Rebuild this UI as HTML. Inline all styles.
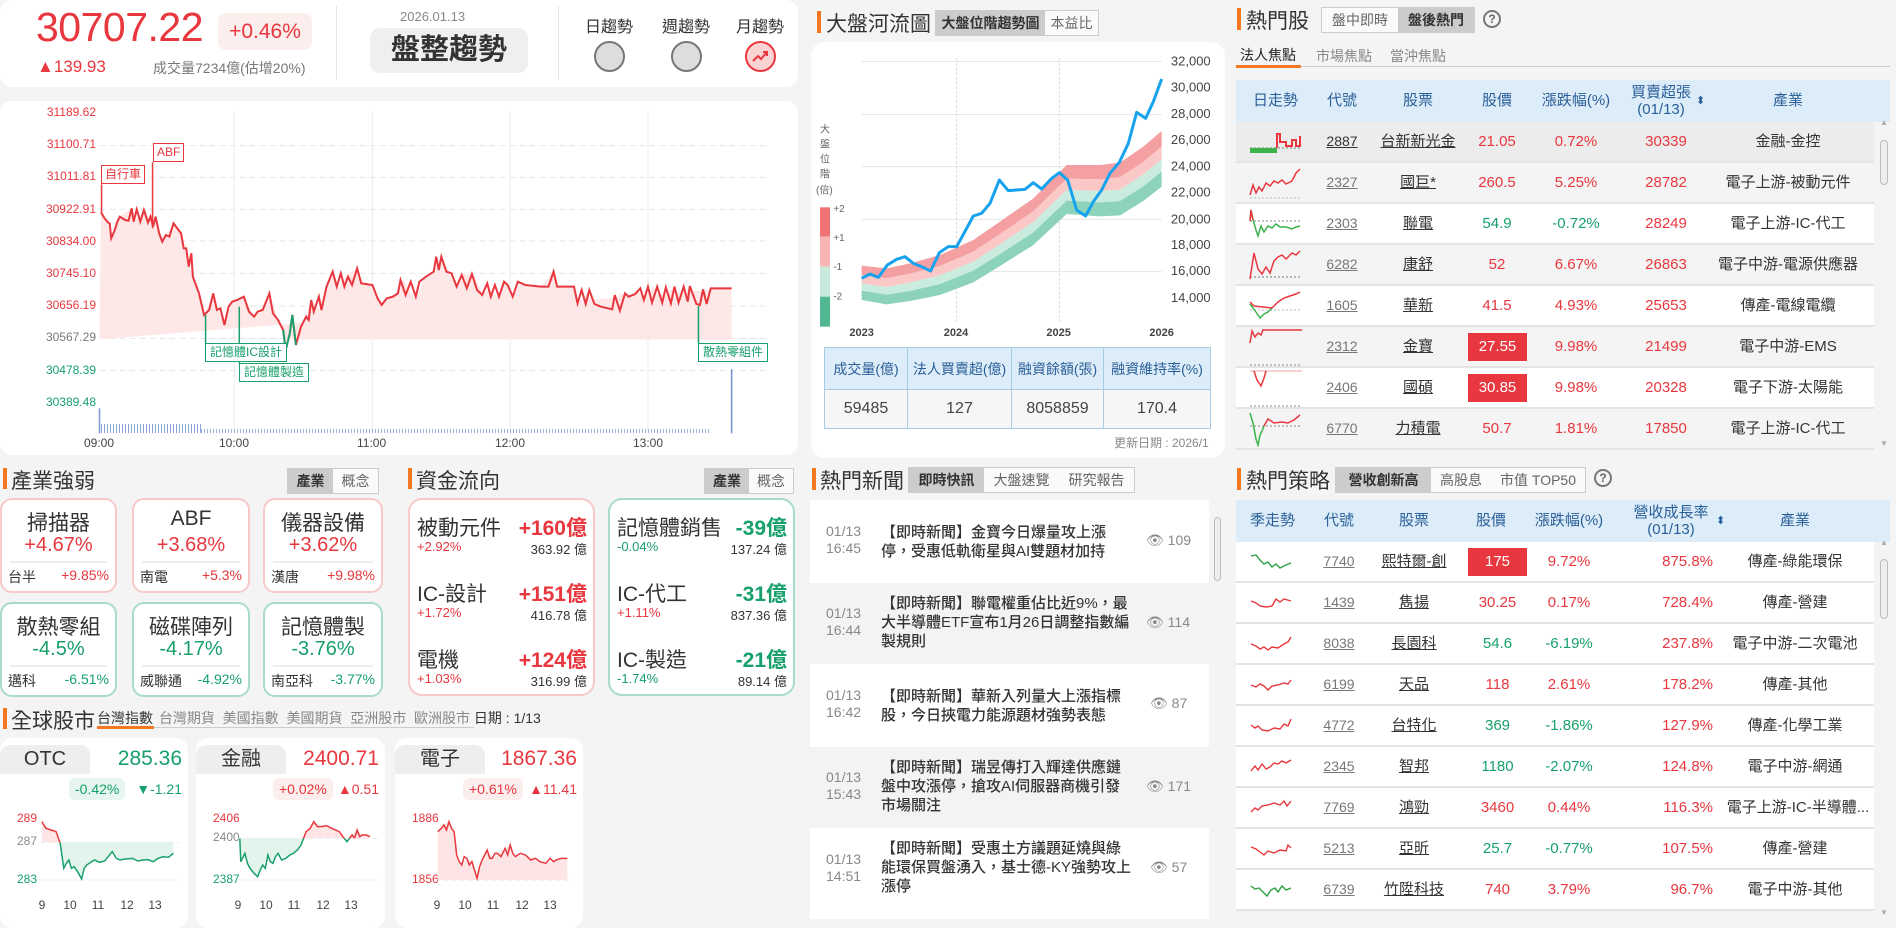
<!DOCTYPE html>
<html><head><meta charset="utf-8">
<style>
*{margin:0;padding:0;box-sizing:border-box}
body{width:1896px;height:919px;background:#f4f4f4;font-family:"Liberation Sans","Noto Sans CJK TC",sans-serif;color:#333;position:relative;overflow:hidden}
.a{position:absolute}
.card{position:absolute;background:#fff;border-radius:12px}
.r{color:#e8373e}.g{color:#17a06b}.gy{color:#888}
.bar{position:absolute;width:4px;background:#f4761f}
.tt{position:absolute;font-size:21px;color:#333;white-space:nowrap}
.tog{position:absolute;display:flex;border:1px solid #ccc;font-size:14px;white-space:nowrap}
.tog span{display:block;text-align:center;background:#f4f4f4;color:#666;line-height:24px}
.tog span.on{background:#ccc;color:#333;font-weight:bold}
.ic{position:absolute;border:2px solid;border-radius:12px;background:#fff}
.ic.p{border-color:#f8c9c9}.ic.q{border-color:#a9dcc8}
.ic .n{position:absolute;left:0;right:0;text-align:center;font-size:21px;top:7px}
.ic .v{position:absolute;left:0;right:0;text-align:center;font-size:20px;top:34px}
.ic .l{position:absolute;left:8px;right:8px;top:61px;border-top:2px solid #eee}
.ic .b{position:absolute;left:6px;right:6px;top:67px;font-size:14px;display:flex;justify-content:space-between}
.fc{position:absolute;border:2px solid;border-radius:14px;background:#fff;top:498px;height:198px}
.fr{position:absolute;left:7px;right:6px;height:44px}
.fr .n{position:absolute;left:0;top:0;font-size:21px}
.fr .v{position:absolute;right:0;top:0;font-size:21px;font-weight:bold}
.fr .p{position:absolute;left:0;top:27px;font-size:13px}
.fr .m{position:absolute;right:0;top:27px;font-size:13px;color:#333}
.gc{position:absolute;top:738px;height:190px;background:#fff;border-radius:12px}
.gc .lab{position:absolute;left:0;top:7px;width:90px;height:29px;background:#eee;border-radius:10px 10px 0 0;font-size:20px;text-align:center;line-height:29px}
.gc .val{position:absolute;right:6px;top:9px;font-size:21px}
.gc .pill{position:absolute;top:40px;height:22px;border-radius:6px;font-size:14px;line-height:22px;padding:0 6px}
.gc .chg{position:absolute;right:6px;top:40px;font-size:14px;line-height:22px}
.gc .yl{position:absolute;left:17px;font-size:12px}
.gc .xl{position:absolute;top:160px;font-size:12px;color:#444;width:20px;text-align:center}
table{border-collapse:collapse}
.tb{position:absolute;left:1236px;width:638px;font-size:15px}
.tb .h{position:absolute;left:0;width:654px;background:#dcedf9;color:#2a5e98}
.tb .row{position:absolute;left:0;width:638px;height:41px;border-bottom:2px solid #e4e4e4}
.tb .c{position:absolute;top:0;line-height:39px;text-align:center;white-space:nowrap}
.u{text-decoration:underline}
.code{color:#777;font-size:14px}
.box{background:#e8373e;color:#fff;display:inline-block;width:59px;line-height:28px;margin-top:5px}
.news{position:absolute;left:810px;width:399px}
.news .d{position:absolute;left:16px;font-size:14px;color:#888;line-height:17px}
.news .t{position:absolute;left:71px;font-size:15px;color:#333;line-height:19px;white-space:nowrap;font-weight:500}
.news .e{position:absolute;left:336px;font-size:14px;color:#888}
</style></head><body>

<!-- TOP CARD -->
<div class="card" style="left:0;top:0;width:798px;height:87px"></div>
<div class="a r" style="left:36px;top:4px;font-size:41px;letter-spacing:-0.5px">30707.22</div>
<div class="a r" style="left:218px;top:13px;width:94px;height:37px;background:#fdeeee;border-radius:8px;font-size:21px;text-align:center;line-height:37px">+0.46%</div>
<div class="a r" style="left:37px;top:57px;font-size:17px">▲139.93</div>
<div class="a" style="left:153px;top:58px;font-size:14px;color:#777">成交量7234億(估增20%)</div>
<div class="a" style="left:336px;top:6px;width:1px;height:74px;background:#e5e5e5"></div>
<div class="a" style="left:400px;top:9px;font-size:13px;color:#888">2026.01.13</div>
<div class="a" style="left:370px;top:28px;width:158px;height:45px;background:#efefef;border-radius:10px;font-size:29px;font-weight:bold;text-align:center;line-height:45px;color:#333">盤整趨勢</div>
<div class="a" style="left:558px;top:6px;width:1px;height:74px;background:#e5e5e5"></div>
<div class="a" style="left:585px;top:13px;font-size:16px">日趨勢</div>
<div class="a" style="left:662px;top:13px;font-size:16px">週趨勢</div>
<div class="a" style="left:736px;top:13px;font-size:16px">月趨勢</div>
<div class="a" style="left:594px;top:41px;width:31px;height:31px;border-radius:50%;background:#ddd;border:2px solid #777"></div>
<div class="a" style="left:671px;top:41px;width:31px;height:31px;border-radius:50%;background:#ddd;border:2px solid #777"></div>
<div class="a" style="left:745px;top:41px;width:31px;height:31px;border-radius:50%;background:#fcd3d3;border:2px solid #e8373e"></div>
<svg class="a" style="left:751px;top:48px" width="19" height="17" viewBox="0 0 19 17"><path d="M2 13 L7 8 L10 11 L16 4 M12 4 H16 V8" fill="none" stroke="#e8373e" stroke-width="2"/></svg>

<!-- MAIN CHART CARD -->
<div class="card" style="left:0;top:101px;width:798px;height:354px"></div>
<svg class="a" style="left:0;top:0" width="800" height="460" viewBox="0 0 1568 1380" preserveAspectRatio="none">
<g stroke="#e6e6e6" stroke-dasharray="6 4" vector-effect="non-scaling-stroke">
<line x1="195" x2="1500" y1="437" y2="437" vector-effect="non-scaling-stroke"/><line x1="195" x2="1500" y1="532" y2="532" vector-effect="non-scaling-stroke"/><line x1="195" x2="1500" y1="628" y2="628" vector-effect="non-scaling-stroke"/><line x1="195" x2="1500" y1="723" y2="723" vector-effect="non-scaling-stroke"/><line x1="195" x2="1500" y1="820" y2="820" vector-effect="non-scaling-stroke"/><line x1="195" x2="1500" y1="918" y2="918" vector-effect="non-scaling-stroke"/><line x1="195" x2="1500" y1="1015" y2="1015" vector-effect="non-scaling-stroke"/><line x1="195" x2="1500" y1="1112" y2="1112" vector-effect="non-scaling-stroke"/>
</g>
<g stroke="#ececec"><line x1="459" x2="459" y1="335" y2="1300" vector-effect="non-scaling-stroke"/><line x1="730" x2="730" y1="335" y2="1300" vector-effect="non-scaling-stroke"/><line x1="1000" x2="1000" y1="335" y2="1300" vector-effect="non-scaling-stroke"/><line x1="1270" x2="1270" y1="335" y2="1300" vector-effect="non-scaling-stroke"/></g>
<polygon fill="#fde7e7" points="195,1018 198,637 215,670 218,715 235,650 258,625 265,660 285,630 300,680 305,650 318,725 340,670 355,700 365,745 372,800 378,830 400,945 418,880 440,975 455,905 478,890 498,950 510,930 528,880 545,960 560,1018 1434,1018 1434,865"/>
<polygon fill="#fde7e7" points="560,1018 573,945 580,1018 600,950 610,900 625,930 640,860 652,815 665,860 680,825 700,805 712,850 730,855 748,915 760,890 780,880 790,840 805,880 818,890 830,840 850,815 865,770 880,820 895,860 910,820 930,830 945,880 960,870 975,890 990,845 1005,890 1020,850 1060,860 1085,815 1090,860 1125,860 1135,910 1150,880 1165,910 1180,920 1200,925 1215,880 1230,890 1250,870 1265,900 1280,860 1300,905 1320,860 1340,905 1350,860 1365,915 1378,870 1385,910 1393,865 1434,865 1434,1018"/>
<polyline fill="none" stroke="#e8373e" stroke-width="2" vector-effect="non-scaling-stroke" points="198,637 205,655 212,668 215,670 218,715 225,690 230,665 235,650 245,660 252,662 258,625 262,665 268,628 275,665 282,630 290,668 295,650 300,680 305,650 312,700 318,725 325,705 332,710 340,670 350,690 355,700 360,745 365,745 370,800 375,760 378,830 390,880 400,945 410,930 418,880 425,930 432,925 440,975 448,920 455,905 465,900 478,890 488,935 498,950 505,935 515,930 528,880 535,940 545,960 555,990 560,1050 568,1000 573,945 580,1035 590,980 600,950 605,960 610,900 615,935 625,890 630,930 640,860 652,815 660,860 668,820 675,860 682,830 690,855 700,805 708,850 730,855 740,895 748,915 758,895 770,890 780,880 785,840 795,885 805,845 815,890 822,845 835,830 850,815 855,770 860,810 865,770 875,815 885,820 895,860 905,825 915,865 925,822 935,870 945,885 955,850 962,890 970,855 978,890 988,845 995,855 1005,890 1015,845 1030,855 1060,860 1075,860 1085,815 1092,860 1125,860 1132,910 1140,870 1148,912 1155,870 1165,912 1178,920 1200,928 1205,885 1215,932 1225,880 1232,890 1245,882 1255,865 1262,900 1270,860 1278,908 1288,860 1298,908 1305,862 1315,910 1322,860 1330,908 1340,860 1348,905 1352,858 1365,912 1372,915 1378,868 1385,912 1393,865 1434,865"/>
<polyline fill="none" stroke="#19a06b" stroke-width="2" vector-effect="non-scaling-stroke" points="555,990 560,1050 568,1000 573,945 580,1035"/>
<g fill="none" stroke-width="1.5" vector-effect="non-scaling-stroke">
<line x1="199" x2="199" y1="553" y2="637" stroke="#e8373e" vector-effect="non-scaling-stroke"/>
<line x1="299" x2="299" y1="487" y2="685" stroke="#e8373e" vector-effect="non-scaling-stroke"/>
<line x1="403" x2="403" y1="945" y2="1030" stroke="#19a06b" vector-effect="non-scaling-stroke"/>
<line x1="469" x2="469" y1="920" y2="1090" stroke="#19a06b" vector-effect="non-scaling-stroke"/>
<line x1="1369" x2="1369" y1="918" y2="1030" stroke="#19a06b" vector-effect="non-scaling-stroke"/>
<line x1="1434" x2="1434" y1="1108" y2="1300" stroke="#6f8fd0" vector-effect="non-scaling-stroke"/>
<line x1="195" x2="195" y1="1225" y2="1300" stroke="#7d98d6" vector-effect="non-scaling-stroke"/>
</g>
</svg>
<div class="a" style="left:101px;top:424px;width:100px;height:9px;background:repeating-linear-gradient(90deg,#8ea6db 0 1px,transparent 1px 3px)"></div>
<div class="a" style="left:201px;top:429px;width:510px;height:4px;background:repeating-linear-gradient(90deg,#9bb0df 0 1px,transparent 1px 3px)"></div>
<div class="a r" style="left:101px;top:165px;padding:0 3px;border:1px solid #e8373e;background:#fff;font-size:12px;line-height:17px">自行車</div>
<div class="a r" style="left:153px;top:143px;padding:0 3px;border:1px solid #e8373e;background:#fff;font-size:12px;line-height:17px">ABF</div>
<div class="a g" style="left:205px;top:343px;padding:0 4px;border:1px solid #19a06b;background:#fff;font-size:12px;line-height:17px">記憶體IC設計</div>
<div class="a g" style="left:239px;top:363px;padding:0 4px;border:1px solid #19a06b;background:#fff;font-size:12px;line-height:17px">記憶體製造</div>
<div class="a g" style="left:698px;top:343px;padding:0 4px;border:1px solid #19a06b;background:#fff;font-size:12px;line-height:17px">散熱零組件</div>
<div class="a" style="left:40px;top:104px;width:56px;text-align:right;font-size:12px;line-height:16px">
<div class="r" style="height:32.2px">31189.62</div><div class="r" style="height:32.2px">31100.71</div><div class="r" style="height:32.2px">31011.81</div><div class="r" style="height:32.2px">30922.91</div><div class="r" style="height:32.2px">30834.00</div><div class="r" style="height:32.2px">30745.10</div><div class="r" style="height:32.2px">30656.19</div><div style="height:32.2px;color:#777">30567.29</div><div class="g" style="height:32.2px">30478.39</div><div class="g" style="height:32.2px">30389.48</div></div>
<div class="a" style="left:84px;top:436px;font-size:12px;color:#444">09:00</div>
<div class="a" style="left:219px;top:436px;font-size:12px;color:#444">10:00</div>
<div class="a" style="left:357px;top:436px;font-size:12px;color:#444">11:00</div>
<div class="a" style="left:495px;top:436px;font-size:12px;color:#444">12:00</div>
<div class="a" style="left:633px;top:436px;font-size:12px;color:#444">13:00</div>

<!-- INDUSTRY -->
<div class="bar" style="left:3px;top:468px;height:21px"></div>
<div class="tt" style="left:11px;top:465px">產業強弱</div>
<div class="tog" style="left:287px;top:468px"><span class="on" style="width:45px">產業</span><span style="width:45px;background:#fafafa">概念</span></div>
<div class="bar" style="left:408px;top:468px;height:21px"></div>
<div class="tt" style="left:416px;top:465px">資金流向</div>
<div class="tog" style="left:704px;top:468px"><span class="on" style="width:44px">產業</span><span style="width:44px;background:#fafafa">概念</span></div>

<div class="ic p" style="left:0;top:498px;width:117px;height:95px"><div class="n">掃描器</div><div class="v r">+4.67%</div><div class="l"></div><div class="b"><span>台半</span><span class="r">+9.85%</span></div></div>
<div class="ic p" style="left:132px;top:498px;width:118px;height:95px"><div class="n">ABF</div><div class="v r">+3.68%</div><div class="l"></div><div class="b"><span>南電</span><span class="r">+5.3%</span></div></div>
<div class="ic p" style="left:263px;top:498px;width:120px;height:95px"><div class="n">儀器設備</div><div class="v r">+3.62%</div><div class="l"></div><div class="b"><span>漢唐</span><span class="r">+9.98%</span></div></div>
<div class="ic q" style="left:0;top:602px;width:117px;height:95px"><div class="n">散熱零組</div><div class="v g">-4.5%</div><div class="l"></div><div class="b"><span>邁科</span><span class="g">-6.51%</span></div></div>
<div class="ic q" style="left:132px;top:602px;width:118px;height:95px"><div class="n">磁碟陣列</div><div class="v g">-4.17%</div><div class="l"></div><div class="b"><span>威聯通</span><span class="g">-4.92%</span></div></div>
<div class="ic q" style="left:263px;top:602px;width:120px;height:95px"><div class="n">記憶體製</div><div class="v g">-3.76%</div><div class="l"></div><div class="b"><span>南亞科</span><span class="g">-3.77%</span></div></div>

<div class="fc" style="left:408px;width:187px;border-color:#f8c9c9">
<div class="fr" style="top:12px"><div class="n">被動元件</div><div class="v r">+160億</div><div class="p r">+2.92%</div><div class="m">363.92 億</div></div>
<div class="fr" style="top:78px"><div class="n">IC-設計</div><div class="v r">+151億</div><div class="p r">+1.72%</div><div class="m">416.78 億</div></div>
<div class="fr" style="top:144px"><div class="n">電機</div><div class="v r">+124億</div><div class="p r">+1.03%</div><div class="m">316.99 億</div></div>
</div>
<div class="fc" style="left:608px;width:187px;border-color:#a9dcc8">
<div class="fr" style="top:12px"><div class="n">記憶體銷售</div><div class="v g">-39億</div><div class="p g">-0.04%</div><div class="m">137.24 億</div></div>
<div class="fr" style="top:78px"><div class="n">IC-代工</div><div class="v g">-31億</div><div class="p r">+1.11%</div><div class="m">837.36 億</div></div>
<div class="fr" style="top:144px"><div class="n">IC-製造</div><div class="v g">-21億</div><div class="p g">-1.74%</div><div class="m">89.14 億</div></div>
</div>

<!-- GLOBAL -->
<div class="bar" style="left:3px;top:708px;height:21px"></div>
<div class="tt" style="left:11px;top:705px">全球股市</div>
<div class="a" style="left:97px;top:727px;width:377px;height:1px;background:#ccc"></div>
<div class="a" style="left:97px;top:726px;width:57px;height:3px;background:#f4761f"></div>
<div class="a" style="left:97px;top:708px;font-size:14px;color:#333;white-space:nowrap;word-spacing:0">台灣指數 <span style="color:#888;margin-left:2px">台灣期貨 &nbsp;美國指數 &nbsp;美國期貨 &nbsp;亞洲股市 &nbsp;歐洲股市</span> 日期 : 1/13</div>

<div class="gc" style="left:0;width:188px"><div class="lab">OTC</div><div class="val g">285.36</div><div class="pill g" style="left:69px;background:#e6f5ef">-0.42%</div><div class="chg g">▼-1.21</div>
<div class="yl r" style="top:73px">289</div><div class="yl gy" style="top:96px">287</div><div class="yl g" style="top:134px">283</div>
<div class="xl" style="left:32px">9</div><div class="xl" style="left:60px">10</div><div class="xl" style="left:88px">11</div><div class="xl" style="left:117px">12</div><div class="xl" style="left:145px">13</div></div>
<div class="gc" style="left:196px;width:189px"><div class="lab">金融</div><div class="val r">2400.71</div><div class="pill r" style="left:77px;background:#fdeeee">+0.02%</div><div class="chg r">▲0.51</div>
<div class="yl r" style="top:73px">2406</div><div class="yl gy" style="top:92px">2400</div><div class="yl g" style="top:134px">2387</div>
<div class="xl" style="left:32px">9</div><div class="xl" style="left:60px">10</div><div class="xl" style="left:88px">11</div><div class="xl" style="left:117px">12</div><div class="xl" style="left:145px">13</div></div>
<div class="gc" style="left:395px;width:188px"><div class="lab">電子</div><div class="val r">1867.36</div><div class="pill r" style="left:68px;background:#fdeeee">+0.61%</div><div class="chg r">▲11.41</div>
<div class="yl r" style="top:73px">1886</div><div class="yl r" style="top:134px">1856</div>
<div class="xl" style="left:32px">9</div><div class="xl" style="left:60px">10</div><div class="xl" style="left:88px">11</div><div class="xl" style="left:117px">12</div><div class="xl" style="left:145px">13</div></div>

<svg class="a" style="left:0;top:455px" width="800" height="464" viewBox="0 0 1568 1392" preserveAspectRatio="none">
<defs><clipPath id="ab1"><rect x="0" y="0" width="400" height="1162"/></clipPath><clipPath id="bl1"><rect x="0" y="1162" width="400" height="300"/></clipPath>
<clipPath id="ab2"><rect x="380" y="0" width="400" height="1150"/></clipPath><clipPath id="bl2"><rect x="380" y="1150" width="400" height="300"/></clipPath></defs>
<g stroke="#e5e5e5" stroke-dasharray="4 4"><line x1="80" x2="350" y1="1275" y2="1275" vector-effect="non-scaling-stroke"/><line x1="465" x2="740" y1="1275" y2="1275" vector-effect="non-scaling-stroke"/><line x1="855" x2="1125" y1="1275" y2="1275" vector-effect="non-scaling-stroke"/><line x1="80" x2="350" y1="1162" y2="1162" vector-effect="non-scaling-stroke"/><line x1="465" x2="740" y1="1150" y2="1150" vector-effect="non-scaling-stroke"/></g>
<g id="otc"><polygon points="82,1162 82,1100 100,1125 110,1130 118,1165 125,1240 135,1215 145,1240 160,1270 170,1230 185,1215 200,1220 220,1190 235,1215 260,1210 280,1215 300,1220 320,1205 340,1195 340,1162" fill="#fde5e5" clip-path="url(#ab1)"/>
<polygon points="82,1162 82,1100 100,1125 110,1130 118,1165 125,1240 135,1215 145,1240 160,1270 170,1230 185,1215 200,1220 220,1190 235,1215 260,1210 280,1215 300,1220 320,1205 340,1195 340,1162" fill="#e3f4ec" clip-path="url(#bl1)"/>
<polyline fill="none" stroke="#e8373e" stroke-width="1.5" vector-effect="non-scaling-stroke" clip-path="url(#ab1)" points="82,1100 90,1120 100,1125 110,1130 118,1165"/>
<polyline fill="none" stroke="#17a06b" stroke-width="1.5" vector-effect="non-scaling-stroke" clip-path="url(#bl1)" points="110,1130 118,1165 125,1240 130,1225 135,1215 140,1240 145,1235 152,1250 160,1272 165,1240 170,1230 180,1220 185,1215 195,1222 205,1218 220,1190 228,1210 235,1215 245,1212 260,1210 270,1218 280,1215 290,1214 300,1220 310,1210 320,1205 330,1207 340,1195"/></g>
<polygon points="470,1150 472,1220 480,1195 490,1240 505,1265 515,1230 525,1200 535,1225 545,1195 560,1210 575,1195 590,1170 600,1130 615,1100 630,1115 650,1120 665,1130 680,1160 690,1140 700,1125 710,1140 725,1145 725,1150" fill="#fde5e5" clip-path="url(#ab2)"/>
<polygon points="470,1150 472,1220 480,1195 490,1240 505,1265 515,1230 525,1200 535,1225 545,1195 560,1210 575,1195 590,1170 600,1130 615,1100 630,1115 650,1120 665,1130 680,1160 690,1140 700,1125 710,1140 725,1145 725,1150" fill="#e3f4ec" clip-path="url(#bl2)"/>
<polyline fill="none" stroke="#17a06b" stroke-width="1.5" vector-effect="non-scaling-stroke" clip-path="url(#bl2)" points="470,1150 472,1220 480,1195 485,1225 490,1240 498,1255 505,1265 510,1245 515,1230 520,1240 525,1200 530,1220 535,1225 540,1205 545,1195 552,1215 560,1210 568,1200 575,1195 583,1185 590,1170 600,1130"/>
<polyline fill="none" stroke="#e8373e" stroke-width="1.5" vector-effect="non-scaling-stroke" clip-path="url(#ab2)" points="590,1170 600,1130 608,1120 615,1100 622,1115 630,1115 640,1112 650,1120 658,1125 665,1130 672,1145 680,1160 690,1140 695,1150 700,1125 705,1145 710,1140 718,1140 725,1145"/>
<polyline fill="none" stroke="#17a06b" stroke-width="1.5" vector-effect="non-scaling-stroke" clip-path="url(#bl2)" points="672,1145 680,1160 690,1140"/>
<polygon points="858,1275 858,1130 870,1110 880,1100 890,1130 895,1200 905,1230 915,1210 925,1220 935,1270 945,1215 955,1185 965,1210 975,1195 990,1180 1000,1170 1010,1205 1030,1200 1050,1210 1070,1225 1090,1215 1112,1210 1112,1275" fill="#fde5e5"/>
<polyline fill="none" stroke="#e8373e" stroke-width="1.5" vector-effect="non-scaling-stroke" points="858,1130 865,1120 870,1110 875,1125 880,1100 885,1120 890,1130 893,1170 895,1200 900,1220 905,1230 910,1205 915,1210 920,1230 925,1220 930,1245 935,1270 940,1235 945,1215 950,1200 955,1185 960,1210 965,1210 970,1195 975,1195 982,1205 990,1180 995,1200 1000,1170 1005,1195 1010,1205 1020,1195 1030,1200 1040,1215 1050,1210 1058,1220 1070,1225 1078,1210 1085,1220 1090,1215 1100,1210 1112,1210"/>
</svg>

<!-- RIVER -->
<div class="bar" style="left:817px;top:11px;height:22px"></div>
<div class="tt" style="left:826px;top:8px">大盤河流圖</div>
<div class="tog" style="left:935px;top:10px"><span class="on" style="width:109px">大盤位階趨勢圖</span><span style="width:53px;background:#fafafa">本益比</span></div>
<div class="card" style="left:811px;top:42px;width:414px;height:416px;border-radius:14px"></div>
<svg class="a" style="left:800px;top:0" width="440" height="460" viewBox="0 0 1320 1380">
<g stroke="#e6e6e6" stroke-width="3"><line x1="185" x2="1085" y1="185" y2="185"/><line x1="185" x2="1085" y1="343" y2="343"/><line x1="185" x2="1085" y1="500" y2="500"/><line x1="185" x2="1085" y1="658" y2="658"/><line x1="185" x2="1085" y1="815" y2="815"/></g>
<g stroke="#d8d8d8" stroke-width="3" stroke-dasharray="8 6"><line x1="470" x2="470" y1="175" y2="965"/><line x1="778" x2="778" y1="175" y2="965"/></g>
<polygon fill="#f4a0a2" points="185,797 260,805 330,790 420,765 520,720 600,665 700,595 800,495 900,495 960,488 1030,440 1085,393 1085,440 1030,486 960,532 900,538 800,536 700,634 600,702 520,755 420,798 330,821 260,835 185,825"/>
<polygon fill="#fbc8c8" points="185,825 260,835 330,821 420,798 520,755 600,702 700,634 800,536 900,538 960,532 1030,486 1085,440 1085,478 1030,523 960,569 900,573 800,570 700,666 600,733 520,785 420,826 330,848 260,861 185,850"/>
<polygon fill="#c9ecdf" points="185,850 260,861 330,848 420,826 520,785 600,733 700,666 800,570 900,573 960,569 1030,523 1085,478 1085,515 1030,559 960,603 900,607 800,602 700,697 600,762 520,812 420,852 330,873 260,884 185,872"/>
<polygon fill="#8dd3b9" points="185,872 260,884 330,873 420,852 520,812 600,762 700,697 800,602 900,607 960,603 1030,559 1085,515 1085,560 1030,603 960,646 900,649 800,642 700,735 600,798 520,847 420,885 330,903 260,913 185,900"/>
<polyline fill="none" stroke="#17a2ee" stroke-width="9" stroke-linejoin="round" points="185,835 210,822 235,832 262,795 290,778 315,770 340,790 365,800 392,813 418,758 445,740 470,740 520,648 545,640 570,610 598,540 625,572 675,568 700,548 725,567 755,535 778,518 803,540 830,630 857,648 880,605 905,570 930,520 958,487 985,430 1010,337 1037,355 1060,305 1085,237"/>
<rect x="60" y="622" width="30" height="88" fill="#f07476"/><rect x="60" y="710" width="30" height="90" fill="#f8b5b6"/><rect x="60" y="800" width="30" height="90" fill="#c5eadc"/><rect x="60" y="890" width="30" height="90" fill="#52b891"/>
<g font-size="30" fill="#666" font-family="Liberation Sans, Noto Sans CJK TC, sans-serif"><text x="100" y="636">+2</text><text x="100" y="723">+1</text><text x="100" y="810">-1</text><text x="100" y="899">-2</text>
<text x="60" y="397">大</text><text x="60" y="442">盤</text><text x="60" y="487">位</text><text x="60" y="532">階</text><text x="48" y="580">(倍)</text></g>
<g font-size="39" fill="#444" font-family="Liberation Sans, sans-serif" text-anchor="end"><text x="1232" y="196">32,000</text><text x="1232" y="274">30,000</text><text x="1232" y="354">28,000</text><text x="1232" y="432">26,000</text><text x="1232" y="511">24,000</text><text x="1232" y="589">22,000</text><text x="1232" y="670">20,000</text><text x="1232" y="747">18,000</text><text x="1232" y="825">16,000</text><text x="1232" y="906">14,000</text></g>
<g font-size="33" fill="#444" font-weight="bold" font-family="Liberation Sans, sans-serif" text-anchor="middle"><text x="185" y="1008">2023</text><text x="468" y="1008">2024</text><text x="776" y="1008">2025</text><text x="1085" y="1008">2026</text></g>
</svg>
<table class="a" style="left:824px;top:347px;width:387px;font-size:14px;text-align:center">
<tr style="background:#dcedf9;color:#2a5e98;height:42px"><td style="border:1px solid #a9cce3;width:83px">成交量(億)</td><td style="border:1px solid #a9cce3;width:104px">法人買賣超(億)</td><td style="border:1px solid #a9cce3;width:92px">融資餘額(張)</td><td style="border:1px solid #a9cce3">融資維持率(%)</td></tr>
<tr style="background:#f6f6f6;height:39px;font-size:16px;color:#444"><td style="border:1px solid #a9cce3">59485</td><td style="border:1px solid #a9cce3">127</td><td style="border:1px solid #a9cce3">8058859</td><td style="border:1px solid #a9cce3">170.4</td></tr></table>
<div class="a" style="left:1114px;top:434px;font-size:12px;color:#888">更新日期 : 2026/1</div>

<!-- NEWS -->
<div class="bar" style="left:812px;top:468px;height:22px"></div>
<div class="tt" style="left:820px;top:465px">熱門新聞</div>
<div class="tog" style="left:908px;top:467px"><span class="on" style="width:75px">即時快訊</span><span style="width:75px;background:#fafafa">大盤速覽</span><span style="width:75px;background:#fafafa">研究報告</span></div>
<div class="news" style="top:500px;height:83px;background:#fff"><div class="d" style="top:23px">01/13<br>16:45</div><div class="t" style="top:23px">【即時新聞】金寶今日爆量攻上漲<br>停，受惠低軌衛星與AI雙題材加持</div><div class="e" style="top:32px">👁 109</div></div>
<div class="news" style="top:583px;height:81px;background:#f3f3f3"><div class="d" style="top:22px">01/13<br>16:44</div><div class="t" style="top:11px">【即時新聞】聯電權重佔比近9%，最<br>大半導體ETF宣布1月26日調整指數編<br>製規則</div><div class="e" style="top:31px">👁 114</div></div>
<div class="news" style="top:664px;height:83px;background:#fff"><div class="d" style="top:23px">01/13<br>16:42</div><div class="t" style="top:23px">【即時新聞】華新入列量大上漲指標<br>股，今日挾電力能源題材強勢表態</div><div class="e" style="top:31px;left:340px">👁 87</div></div>
<div class="news" style="top:747px;height:81px;background:#f3f3f3"><div class="d" style="top:22px">01/13<br>15:43</div><div class="t" style="top:11px">【即時新聞】瑞昱傳打入輝達供應鏈<br>盤中攻漲停，搶攻AI伺服器商機引發<br>市場關注</div><div class="e" style="top:31px">👁 171</div></div>
<div class="news" style="top:828px;height:91px;background:#fff"><div class="d" style="top:23px">01/13<br>14:51</div><div class="t" style="top:11px">【即時新聞】受惠土方議題延燒與綠<br>能環保買盤湧入，基士德-KY強勢攻上<br>漲停</div><div class="e" style="top:31px;left:340px">👁 57</div></div>
<div class="a" style="left:1214px;top:517px;width:7px;height:64px;border:1px solid #bbb;border-radius:4px;background:#eee"></div>

<!-- HOT STOCKS -->
<div class="bar" style="left:1237px;top:8px;height:22px"></div>
<div class="tt" style="left:1246px;top:5px">熱門股</div>
<div class="tog" style="left:1321px;top:7px"><span style="width:76px;background:#fafafa">盤中即時</span><span class="on" style="width:76px">盤後熱門</span></div>
<div class="a" style="left:1483px;top:10px;width:18px;height:18px;border:2px solid #777;border-radius:50%;font-size:12px;text-align:center;line-height:14px;color:#666;font-weight:bold">?</div>
<div class="a" style="left:1240px;top:45px;font-size:14px;color:#222">法人焦點</div>
<div class="a" style="left:1316px;top:46px;font-size:14px;color:#888">市場焦點</div>
<div class="a" style="left:1390px;top:46px;font-size:14px;color:#888">當沖焦點</div>
<div class="a" style="left:1236px;top:66px;width:654px;height:1px;background:#ccc"></div>
<div class="a" style="left:1236px;top:65px;width:65px;height:3px;background:#f4761f"></div>

<div class="tb" style="top:80px">
<div class="h" style="top:0;height:42px">
<div class="c" style="left:17px;width:44px;line-height:42px">日走勢</div><div class="c" style="left:86px;width:40px;line-height:42px">代號</div><div class="c" style="left:162px;width:40px;line-height:42px">股票</div><div class="c" style="left:241px;width:40px;line-height:42px">股價</div><div class="c" style="left:300px;width:80px;line-height:42px">漲跌幅(%)</div>
<div class="c" style="left:390px;width:70px;line-height:17px;top:4px">買賣超張<br>(01/13)</div><div class="c" style="left:460px;top:0;line-height:42px;font-size:11px">⬍</div><div class="c" style="left:532px;width:40px;line-height:42px">產業</div></div>
</div>

<div class="a" style="left:1880px;top:118px;font-size:8px;color:#aaa">▲</div>
<div class="a" style="left:1880px;top:140px;width:8px;height:45px;border:1px solid #bbb;border-radius:4px;background:#eee"></div>
<div class="a" style="left:1880px;top:439px;font-size:8px;color:#aaa">▼</div>

<!-- hot stocks rows -->
<div class="tb" style="top:122px">
<div class="row" style="top:0;background:#ececec"><svg class="a" style="left:12px;top:4px" width="54" height="32" viewBox="0 0 54 32"><line x1="2" y1="22" x2="54" y2="22" stroke="#777" stroke-dasharray="2 2"/><rect x="2" y="22" width="27" height="5" fill="#3cb34a"/><path d="M29 22 V8 H32 V16 H38 V20 H44 V14 H48 V20 H52 V10" fill="none" stroke="#e8373e" stroke-width="2"/></svg>
<div class="c code u" style="left:86px;width:40px;color:#333">2887</div><div class="c u" style="left:142px;width:80px">台新新光金</div><div class="c r" style="left:241px;width:40px">21.05</div><div class="c r" style="left:300px;width:80px">0.72%</div><div class="c r" style="left:400px;width:60px">30339</div><div class="c" style="left:492px;width:120px">金融-金控</div></div>
<div class="row" style="top:41px;background:#f4f4f4"><svg class="a" style="left:12px;top:4px" width="54" height="32" viewBox="0 0 54 32"><line x1="2" y1="31" x2="54" y2="31" stroke="#bbb" stroke-dasharray="2 2"/><polyline points="2,28 5,18 8,26 11,20 14,24 18,16 22,19 26,14 30,16 34,13 38,17 44,14 48,6 52,2" fill="none" stroke="#e8373e" stroke-width="1.5"/></svg>
<div class="c code u" style="left:86px;width:40px">2327</div><div class="c u" style="left:142px;width:80px">國巨*</div><div class="c r" style="left:241px;width:40px">260.5</div><div class="c r" style="left:300px;width:80px">5.25%</div><div class="c r" style="left:400px;width:60px">28782</div><div class="c" style="left:472px;width:160px">電子上游-被動元件</div></div>
<div class="row" style="top:82px;background:#fff"><svg class="a" style="left:12px;top:4px" width="54" height="32" viewBox="0 0 54 32"><line x1="2" y1="13" x2="54" y2="13" stroke="#888" stroke-dasharray="2 2"/><polyline points="2,13 3,2 5,12 8,22 10,28 13,18 16,24 20,18 24,20 28,16 32,19 38,19 44,21 48,19 52,18" fill="none" stroke="#3cb34a" stroke-width="1.5"/><polyline points="2,13 3,2 5,12" fill="none" stroke="#e8373e" stroke-width="1.5"/></svg>
<div class="c code u" style="left:86px;width:40px">2303</div><div class="c u" style="left:142px;width:80px">聯電</div><div class="c g" style="left:241px;width:40px">54.9</div><div class="c g" style="left:300px;width:80px">-0.72%</div><div class="c r" style="left:400px;width:60px">28249</div><div class="c" style="left:472px;width:160px">電子上游-IC-代工</div></div>
<div class="row" style="top:123px;background:#f4f4f4"><svg class="a" style="left:12px;top:4px" width="54" height="32" viewBox="0 0 54 32"><line x1="2" y1="28" x2="54" y2="28" stroke="#777" stroke-dasharray="2 2"/><polyline points="2,30 6,4 10,20 14,25 18,18 22,24 26,12 30,8 34,6 38,10 44,4 48,6 52,2" fill="none" stroke="#e8373e" stroke-width="1.5"/></svg>
<div class="c code u" style="left:86px;width:40px">6282</div><div class="c u" style="left:142px;width:80px">康舒</div><div class="c r" style="left:241px;width:40px">52</div><div class="c r" style="left:300px;width:80px">6.67%</div><div class="c r" style="left:400px;width:60px">26863</div><div class="c" style="left:472px;width:160px">電子中游-電源供應器</div></div>
<div class="row" style="top:164px;background:#fff"><svg class="a" style="left:12px;top:4px" width="54" height="32" viewBox="0 0 54 32"><line x1="2" y1="20" x2="54" y2="20" stroke="#bbb" stroke-dasharray="2 2"/><polyline points="2,14 8,22 12,28 16,24 20,22 24,18" fill="none" stroke="#3cb34a" stroke-width="1.5"/><polyline points="2,12 6,16 24,18 30,12 36,8 42,6 48,4 52,2" fill="none" stroke="#e8373e" stroke-width="1.5"/></svg>
<div class="c code u" style="left:86px;width:40px">1605</div><div class="c u" style="left:142px;width:80px">華新</div><div class="c r" style="left:241px;width:40px">41.5</div><div class="c r" style="left:300px;width:80px">4.93%</div><div class="c r" style="left:400px;width:60px">25653</div><div class="c" style="left:472px;width:160px">傳產-電線電纜</div></div>
<div class="row" style="top:205px;background:#f4f4f4"><svg class="a" style="left:12px;top:0" width="54" height="40" viewBox="0 0 54 40"><line x1="2" y1="38" x2="54" y2="38" stroke="#888" stroke-dasharray="2 2"/><polyline points="2,16 4,4 7,10 10,6 13,8 15,3 54,3" fill="none" stroke="#e8373e" stroke-width="1.5"/></svg>
<div class="c code u" style="left:86px;width:40px">2312</div><div class="c u" style="left:142px;width:80px">金寶</div><div class="c" style="left:232px;width:59px"><span class="box">27.55</span></div><div class="c r" style="left:300px;width:80px">9.98%</div><div class="c r" style="left:400px;width:60px">21499</div><div class="c" style="left:472px;width:160px">電子中游-EMS</div></div>
<div class="row" style="top:246px;background:#fff"><svg class="a" style="left:12px;top:0" width="54" height="40" viewBox="0 0 54 40"><line x1="2" y1="38" x2="54" y2="38" stroke="#888" stroke-dasharray="2 2"/><line x1="2" y1="3" x2="54" y2="3" stroke="#f3a0a0"/><polyline points="6,3 9,12 13,18 16,10 18,3" fill="none" stroke="#e8373e" stroke-width="1.5"/></svg>
<div class="c code u" style="left:86px;width:40px">2406</div><div class="c u" style="left:142px;width:80px">國碩</div><div class="c" style="left:232px;width:59px"><span class="box">30.85</span></div><div class="c r" style="left:300px;width:80px">9.98%</div><div class="c r" style="left:400px;width:60px">20328</div><div class="c" style="left:472px;width:160px">電子下游-太陽能</div></div>
<div class="row" style="top:287px;background:#f4f4f4"><svg class="a" style="left:12px;top:2px" width="54" height="36" viewBox="0 0 54 36"><line x1="2" y1="15" x2="54" y2="15" stroke="#888" stroke-dasharray="2 2"/><polyline points="2,2 5,12 8,28 10,34 12,24 14,20 16,15" fill="none" stroke="#3cb34a" stroke-width="1.5"/><polyline points="16,15 20,8 26,12 34,11 40,12 46,9 52,4" fill="none" stroke="#e8373e" stroke-width="1.5"/></svg>
<div class="c code u" style="left:86px;width:40px">6770</div><div class="c u" style="left:142px;width:80px">力積電</div><div class="c r" style="left:241px;width:40px">50.7</div><div class="c r" style="left:300px;width:80px">1.81%</div><div class="c r" style="left:400px;width:60px">17850</div><div class="c" style="left:472px;width:160px">電子上游-IC-代工</div></div>
</div>

<!-- STRATEGY -->
<div class="bar" style="left:1237px;top:468px;height:22px"></div>
<div class="tt" style="left:1246px;top:465px">熱門策略</div>
<div class="tog" style="left:1335px;top:467px"><span class="on" style="width:95px">營收創新高</span><span style="width:60px;background:#fafafa">高股息</span><span style="width:94px;background:#fafafa">市值 TOP50</span></div>
<div class="a" style="left:1594px;top:469px;width:18px;height:18px;border:2px solid #777;border-radius:50%;font-size:12px;text-align:center;line-height:14px;color:#666;font-weight:bold">?</div>

<div class="tb" style="top:500px">
<div class="h" style="top:0;height:42px">
<div class="c" style="left:14px;width:44px;line-height:42px">季走勢</div><div class="c" style="left:83px;width:40px;line-height:42px">代號</div><div class="c" style="left:158px;width:40px;line-height:42px">股票</div><div class="c" style="left:235px;width:40px;line-height:42px">股價</div><div class="c" style="left:293px;width:80px;line-height:42px">漲跌幅(%)</div>
<div class="c" style="left:390px;width:90px;line-height:17px;top:4px">營收成長率<br>(01/13)</div><div class="c" style="left:480px;top:0;line-height:42px;font-size:11px">⬍</div><div class="c" style="left:539px;width:40px;line-height:42px">產業</div></div>
</div>
<div class="a" style="left:1880px;top:538px;font-size:8px;color:#aaa">▲</div>
<div class="a" style="left:1880px;top:559px;width:8px;height:60px;border:1px solid #bbb;border-radius:4px;background:#eee"></div>
<div class="a" style="left:1880px;top:908px;font-size:8px;color:#aaa">▼</div>

<div class="tb" style="top:542px">
<div class="row" style="top:0;background:#fff"><svg class="a" style="left:14px;top:10px" width="42" height="20"><polyline points="1,4 6,3 10,8 14,12 18,10 22,15 26,12 30,16 36,13 41,11" fill="none" stroke="#2ea043" stroke-width="1.4"/></svg>
<div class="c code u" style="left:83px;width:40px">7740</div><div class="c u" style="left:138px;width:80px">熙特爾-創</div><div class="c" style="left:232px;width:59px"><span class="box">175</span></div><div class="c r" style="left:293px;width:80px">9.72%</div><div class="c r" style="left:415px;width:62px;text-align:right">875.8%</div><div class="c" style="left:495px;width:128px">傳產-綠能環保</div></div>
<div class="row" style="top:41px;background:#fff"><svg class="a" style="left:14px;top:10px" width="42" height="20"><polyline points="1,8 6,10 10,13 16,14 22,13 26,6 30,9 34,6 41,8" fill="none" stroke="#e8373e" stroke-width="1.4"/></svg>
<div class="c code u" style="left:83px;width:40px">1439</div><div class="c u" style="left:138px;width:80px">雋揚</div><div class="c r" style="left:232px;width:59px">30.25</div><div class="c r" style="left:293px;width:80px">0.17%</div><div class="c r" style="left:415px;width:62px;text-align:right">728.4%</div><div class="c" style="left:495px;width:128px">傳產-營建</div></div>
<div class="row" style="top:82px;background:#fff"><svg class="a" style="left:14px;top:10px" width="42" height="20"><polyline points="1,10 6,12 10,15 14,13 18,16 22,13 28,14 34,10 38,8 41,3" fill="none" stroke="#e8373e" stroke-width="1.4"/></svg>
<div class="c code u" style="left:83px;width:40px">8038</div><div class="c u" style="left:138px;width:80px">長園科</div><div class="c g" style="left:232px;width:59px">54.6</div><div class="c g" style="left:293px;width:80px">-6.19%</div><div class="c r" style="left:415px;width:62px;text-align:right">237.8%</div><div class="c" style="left:495px;width:128px">電子中游-二次電池</div></div>
<div class="row" style="top:123px;background:#fff"><svg class="a" style="left:14px;top:10px" width="42" height="20"><polyline points="1,10 6,12 10,9 14,11 18,15 22,11 28,10 34,8 38,9 41,5" fill="none" stroke="#e8373e" stroke-width="1.4"/></svg>
<div class="c code u" style="left:83px;width:40px">6199</div><div class="c u" style="left:138px;width:80px">天品</div><div class="c r" style="left:232px;width:59px">118</div><div class="c r" style="left:293px;width:80px">2.61%</div><div class="c r" style="left:415px;width:62px;text-align:right">178.2%</div><div class="c" style="left:495px;width:128px">傳產-其他</div></div>
<div class="row" style="top:164px;background:#fff"><svg class="a" style="left:14px;top:10px" width="42" height="20"><polyline points="1,9 5,12 8,10 12,14 18,15 24,12 30,13 34,8 38,10 41,3" fill="none" stroke="#e8373e" stroke-width="1.4"/></svg>
<div class="c code u" style="left:83px;width:40px">4772</div><div class="c u" style="left:138px;width:80px">台特化</div><div class="c g" style="left:232px;width:59px">369</div><div class="c g" style="left:293px;width:80px">-1.86%</div><div class="c r" style="left:415px;width:62px;text-align:right">127.9%</div><div class="c" style="left:495px;width:128px">傳產-化學工業</div></div>
<div class="row" style="top:205px;background:#fff"><svg class="a" style="left:14px;top:10px" width="42" height="20"><polyline points="1,14 5,9 8,13 12,7 16,12 20,10 24,6 28,7 32,4 36,6 41,3" fill="none" stroke="#e8373e" stroke-width="1.4"/></svg>
<div class="c code u" style="left:83px;width:40px">2345</div><div class="c u" style="left:138px;width:80px">智邦</div><div class="c g" style="left:232px;width:59px">1180</div><div class="c g" style="left:293px;width:80px">-2.07%</div><div class="c r" style="left:415px;width:62px;text-align:right">124.8%</div><div class="c" style="left:495px;width:128px">電子中游-網通</div></div>
<div class="row" style="top:246px;background:#fff"><svg class="a" style="left:14px;top:10px" width="42" height="20"><polyline points="1,14 5,10 8,12 12,8 18,7 24,5 30,7 34,3 37,8 41,3" fill="none" stroke="#e8373e" stroke-width="1.4"/></svg>
<div class="c code u" style="left:83px;width:40px">7769</div><div class="c u" style="left:138px;width:80px">鴻勁</div><div class="c r" style="left:232px;width:59px">3460</div><div class="c r" style="left:293px;width:80px">0.44%</div><div class="c r" style="left:415px;width:62px;text-align:right">116.3%</div><div class="c" style="left:488px;width:148px">電子上游-IC-半導體...</div></div>
<div class="row" style="top:287px;background:#fff"><svg class="a" style="left:14px;top:10px" width="42" height="20"><polyline points="1,8 6,10 10,13 14,16 18,12 24,14 30,11 36,12 38,6 41,9" fill="none" stroke="#e8373e" stroke-width="1.4"/></svg>
<div class="c code u" style="left:83px;width:40px">5213</div><div class="c u" style="left:138px;width:80px">亞昕</div><div class="c g" style="left:232px;width:59px">25.7</div><div class="c g" style="left:293px;width:80px">-0.77%</div><div class="c r" style="left:415px;width:62px;text-align:right">107.5%</div><div class="c" style="left:495px;width:128px">傳產-營建</div></div>
<div class="row" style="top:328px;background:#fff"><svg class="a" style="left:14px;top:10px" width="42" height="20"><polyline points="1,6 5,9 9,8 13,12 17,16 21,10 25,8 28,12 32,6 36,10 41,8" fill="none" stroke="#2ea043" stroke-width="1.4"/></svg>
<div class="c code u" style="left:83px;width:40px">6739</div><div class="c u" style="left:138px;width:80px">竹陞科技</div><div class="c r" style="left:232px;width:59px">740</div><div class="c r" style="left:293px;width:80px">3.79%</div><div class="c r" style="left:415px;width:62px;text-align:right">96.7%</div><div class="c" style="left:495px;width:128px">電子中游-其他</div></div>
</div>

</body></html>
